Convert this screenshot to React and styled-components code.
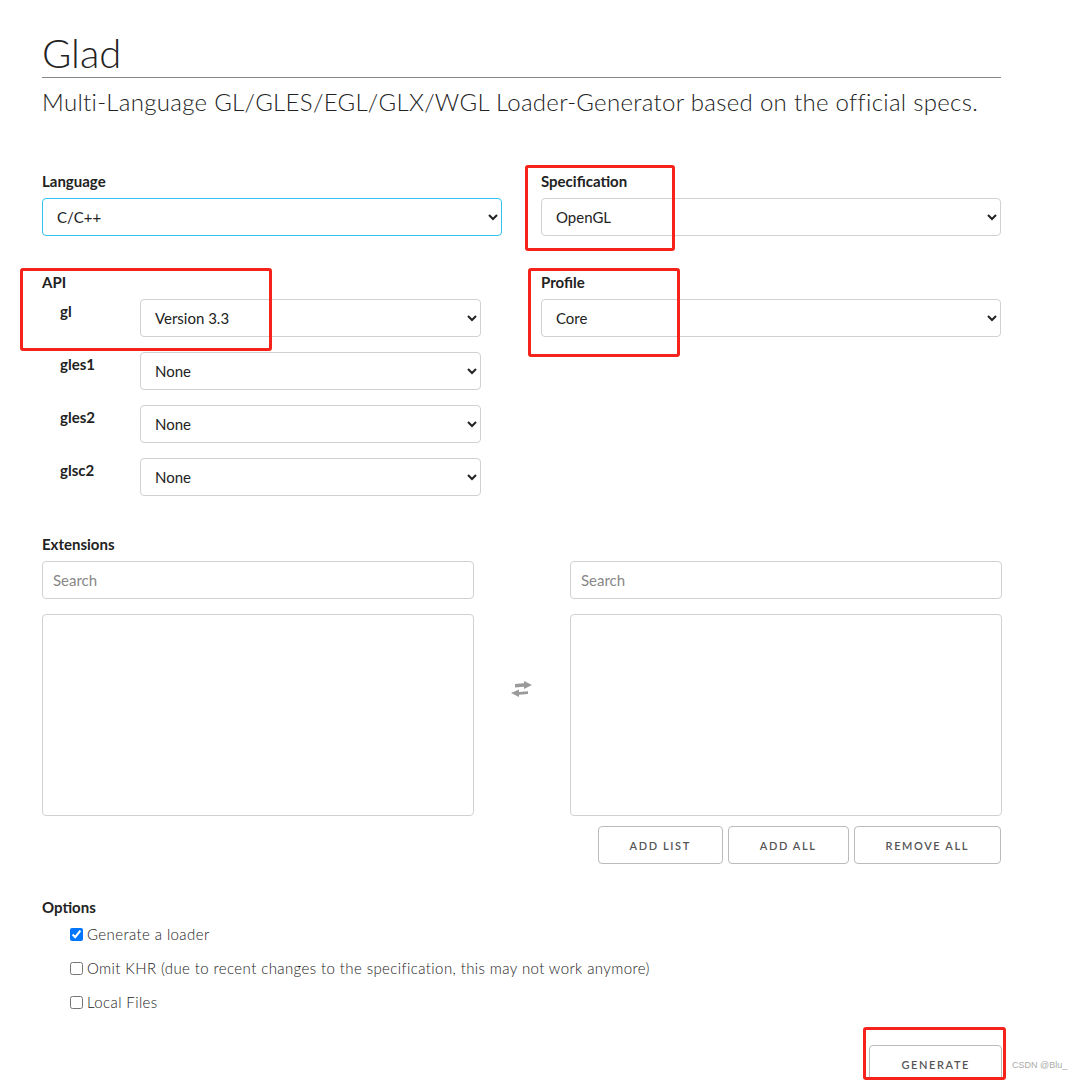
import React from 'react'
import styled, { createGlobalStyle } from 'styled-components'

const GlobalStyle = createGlobalStyle`
  body {
    margin: 0;
    background: #fff;
    font-family: Lato, "Open Sans", sans-serif;
    color: #222;
  }
`

const Page = styled.div`
  position: relative;
  width: 1082px;
  height: 1080px;
  overflow: hidden;
  padding: 30px 0 0 42px;
  box-sizing: border-box;
`

const Container = styled.div`
  width: 960px;
`

const Title = styled.h1`
  margin: 0;
  font-size: 40px;
  font-weight: 300;
  line-height: 46px;
  padding-bottom: 1px;
  border-bottom: 1px solid #888;
  width: 959px;
`

const Subtitle = styled.p`
  margin: 9px 0 0;
  font-size: 24px;
  font-weight: 300;
  line-height: 30px;
  letter-spacing: 0.3px;
`

const TwoCols = styled.div`
  display: grid;
  grid-template-columns: 460px 460px;
  column-gap: 39px;
  margin-top: ${(p) => p.top || 0}px;
`

const Label = styled.label`
  display: block;
  font-size: 15px;
  font-weight: 700;
  line-height: 20px;
  margin-top: ${(p) => p.mt || 0}px;
  margin-bottom: ${(p) => p.mb ?? 7}px;
`

const Select = styled.select`
  width: 100%;
  height: 38px;
  padding: 0 10px;
  font-family: Lato, sans-serif;
  font-size: 15px;
  color: #222;
  background: #fff;
  border: 1px solid ${(p) => (p.focus ? '#33C3F0' : '#D1D1D1')};
  border-radius: 4px;
  box-sizing: border-box;
`

const ApiRow = styled.div`
  display: grid;
  grid-template-columns: 98px 341px;
  margin-bottom: 15px;
`

const ApiName = styled.span`
  font-size: 15px;
  font-weight: 700;
  padding: 3px 0 0 18px;
`

const ExtGrid = styled.div`
  display: grid;
  grid-template-columns: 432px 96px 432px;
`

const Column = styled.div`
  display: flex;
  flex-direction: column;
  gap: 15px;
`

const SearchInput = styled.input`
  height: 38px;
  padding: 0 10px;
  font-family: Lato, sans-serif;
  font-size: 15px;
  border: 1px solid #D1D1D1;
  border-radius: 4px;
  box-sizing: border-box;
  &::placeholder {
    color: #888;
  }
`

const ListBox = styled.div`
  height: 202px;
  border: 1px solid #D1D1D1;
  border-radius: 4px;
  box-sizing: border-box;
`

const Middle = styled.div`
  display: flex;
  align-items: center;
  justify-content: center;
  padding-right: 2px;
`

const Buttons = styled.div`
  display: flex;
  justify-content: flex-end;
  gap: 5px;
  margin-top: 10px;
  padding-right: 1px;
`

const Button = styled.button`
  height: 38px;
  padding: 0 31px;
  background: #fff;
  border: 1px solid #bbb;
  border-radius: 4px;
  font-family: Lato, sans-serif;
  font-size: 11px;
  font-weight: 600;
  letter-spacing: 1.6px;
  color: #555;
  text-transform: uppercase;
`

const Options = styled.div`
  margin-top: 33px;
`

const CheckRow = styled.label`
  display: flex;
  align-items: center;
  gap: 4px;
  padding-left: 28px;
  height: 34px;
  font-size: 15px;
  font-weight: 300;
  letter-spacing: 0.4px;
  input {
    margin: 0;
    width: 13px;
    height: 13px;
  }
`

const Footer = styled.div`
  display: flex;
  justify-content: flex-end;
  margin-top: 26px;
`

const Watermark = styled.span`
  position: absolute;
  left: 1012px;
  top: 1060px;
  font-family: "Liberation Sans", sans-serif;
  font-size: 9px;
  color: #aaa;
`

const Mark = styled.div`
  position: absolute;
  border: 3px solid #f5231c;
  border-radius: 3px;
  box-sizing: border-box;
  pointer-events: none;
`

const marks = [
  { left: 525, top: 165, width: 150, height: 86 },
  { left: 20, top: 268, width: 252, height: 83 },
  { left: 528, top: 268, width: 152, height: 89 },
  { left: 863, top: 1027, width: 143, height: 53 },
]

const apis = [
  ['gl', 'Version 3.3'],
  ['gles1', 'None'],
  ['gles2', 'None'],
  ['glsc2', 'None'],
]

// font awesome 4 style "exchange" glyph
const ExchangeIcon = () => (
  <svg width="21" height="16" viewBox="0 0 21 16">
    <g fill="#9a9a9a">
      <path d="M4 3 L13 2.2 L13 0 L21 4 L13 8 L13 5.8 L4 6.6 Z" />
      <path d="M17 10.2 L8 11 L8 8.6 L0 12 L8 16 L8 13.8 L17 13 Z" />
    </g>
  </svg>
)

export default function App() {
  return (
    <>
      <GlobalStyle />
      <Page>
        <Container>
          <Title>Glad</Title>
          <Subtitle>
            Multi-Language GL/GLES/EGL/GLX/WGL Loader-Generator based on the official specs.
          </Subtitle>

          <TwoCols top={54}>
            <div>
              <Label>Language</Label>
              <Select focus>
                <option>C/C++</option>
              </Select>
            </div>
            <div>
              <Label>Specification</Label>
              <Select>
                <option>OpenGL</option>
              </Select>
            </div>
          </TwoCols>

          <TwoCols top={36}>
            <div>
              <Label>API</Label>
              {apis.map(([name, value]) => (
                <ApiRow key={name}>
                  <ApiName>{name}</ApiName>
                  <Select>
                    <option>{value}</option>
                  </Select>
                </ApiRow>
              ))}
            </div>
            <div>
              <Label>Profile</Label>
              <Select>
                <option>Core</option>
              </Select>
            </div>
          </TwoCols>

          <Label mt={23} mb={7}>Extensions</Label>
          <ExtGrid>
            <Column>
              <SearchInput placeholder="Search" />
              <ListBox />
            </Column>
            <Middle>
              <ExchangeIcon />
            </Middle>
            <Column>
              <SearchInput placeholder="Search" />
              <ListBox />
            </Column>
          </ExtGrid>

          <Buttons>
            <Button>Add list</Button>
            <Button>Add all</Button>
            <Button>Remove all</Button>
          </Buttons>

          <Options>
            <Label mb={0}>Options</Label>
            <CheckRow>
              <input type="checkbox" defaultChecked />
              Generate a loader
            </CheckRow>
            <CheckRow>
              <input type="checkbox" />
              Omit KHR (due to recent changes to the specification, this may not work anymore)
            </CheckRow>
            <CheckRow>
              <input type="checkbox" />
              Local Files
            </CheckRow>
          </Options>

          <Footer>
            <Button>Generate</Button>
          </Footer>
        </Container>

        {marks.map((m, i) => (
          <Mark key={i} style={m} />
        ))}
        <Watermark>CSDN @Blu_</Watermark>
      </Page>
    </>
  )
}
